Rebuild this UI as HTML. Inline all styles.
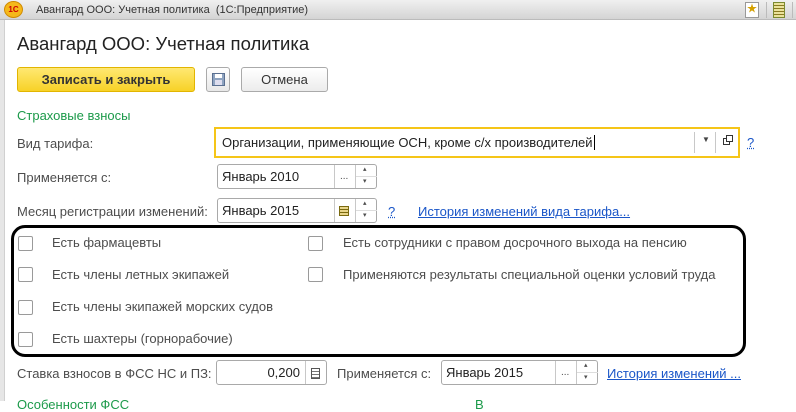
<!DOCTYPE html>
<html><head><meta charset="utf-8"><style>
*{box-sizing:border-box;margin:0;padding:0}
body{width:796px;height:401px;overflow:hidden;background:#fff;font-family:"Liberation Sans","Noto Sans CJK SC",sans-serif;font-size:13px;color:#4d4d4d;position:relative}
.a{position:absolute;white-space:nowrap}
.title{left:0;top:0;width:796px;height:20px;background:linear-gradient(#f0f0f0,#d4d4d4);border-bottom:1px solid #bbb}
.lb{left:0;top:20px;width:5px;height:381px;background:#e6e6e6;border-right:1px solid #d0d0d0}
.fld{position:absolute;border:1px solid #a9a9a9;border-radius:3px;background:#fff}
.cb{position:absolute;width:15px;height:15px;border:1px solid #9a9a9a;border-radius:2px;background:#fff}
.link{color:#1a56c8;text-decoration:underline}
.q{color:#1a56c8;text-decoration:underline dotted}
.sep{position:absolute;top:0;bottom:0;width:1px;background:#c8c8c8}
</style></head><body>
<div class="a title"></div>
<div class="a" style="left:4px;top:1px;width:19px;height:17px;border-radius:50%;background:#f5b81a;border:1px solid #d08a00;font-size:8px;font-weight:bold;color:#c00;text-align:center;line-height:15px">1С</div>
<div class="a" style="left:36px;top:4px;font-size:11px;color:#333">Авангард ООО: Учетная политика &nbsp;(1С:Предприятие)</div>
<div class="a" style="left:745px;top:2px;width:14px;height:16px;border:1px solid #999;background:#fff;font-size:10px;color:#d4a000;text-align:center;line-height:14px">★</div>
<div class="a" style="left:766px;top:2px;width:1px;height:16px;background:#bbb"></div>
<div class="a" style="left:773px;top:2px;width:12px;height:16px;border:1px solid #7a8a30;background:repeating-linear-gradient(#e9e29a 0 2px,#8a7a20 2px 3px)"></div>
<div class="a" style="left:792px;top:2px;width:1px;height:16px;background:#bbb"></div>
<div class="a lb"></div>

<div class="a" style="left:17px;top:33px;font-size:18.5px;color:#222">Авангард ООО: Учетная политика</div>

<div class="a" style="left:17px;top:67px;width:178px;height:25px;border:1px solid #e2b500;border-radius:3px;background:linear-gradient(#ffe872,#f7d227);font-weight:bold;color:#333;text-align:center;line-height:23px">Записать и закрыть</div>
<div class="a" style="left:206px;top:67px;width:24px;height:25px;border:1px solid #aaa;border-radius:3px;background:linear-gradient(#fff,#e8e8e8)"><div style="position:absolute;left:5px;top:5px;width:13px;height:13px;background:#8ea3c0;border:1px solid #5a6f90"><div style="position:absolute;left:2px;top:0;width:7px;height:4px;background:#fff"></div><div style="position:absolute;left:2px;top:6px;width:7px;height:5px;background:#dde"></div></div></div>
<div class="a" style="left:241px;top:67px;width:87px;height:25px;border:1px solid #aaa;border-radius:3px;background:linear-gradient(#fff,#ececec);color:#333;text-align:center;line-height:23px">Отмена</div>

<div class="a" style="left:17px;top:108px;color:#1c9a4a">Страховые взносы</div>

<div class="a" style="left:17px;top:136px">Вид тарифа:</div>
<div class="fld" style="left:214px;top:127px;width:526px;height:31px;border:2px solid #f5c518;border-radius:0">
<div class="a" style="left:6px;top:6px;color:#222">Организации, применяющие ОСН, кроме с/х производителей<span style="border-left:1px solid #000;margin-left:1px"></span></div>
<div class="sep" style="left:478px;top:3px;bottom:3px"></div>
<div class="a" style="left:486px;top:6px;font-size:8px;color:#444">▼</div>
<div class="sep" style="left:499px;top:3px;bottom:3px"></div>
<div class="a" style="left:507px;top:9px;width:7px;height:7px;border:1px solid #333"></div>
<div class="a" style="left:510px;top:6px;width:7px;height:7px;border:1px solid #333;background:#fff"></div>
</div>
<div class="a q" style="left:747px;top:135px">?</div>

<div class="a" style="left:17px;top:170px">Применяется с:</div>
<div class="fld" style="left:217px;top:164px;width:160px;height:25px">
<div class="a" style="left:4px;top:4px;color:#222">Январь 2010</div>
<div class="sep" style="left:116px"></div><div class="a" style="left:122px;top:6px;font-size:10px">...</div>
<div class="sep" style="left:137px"></div>
<div class="a" style="left:138px;top:11px;width:21px;height:1px;background:#ddd"></div>
<div class="a" style="left:145px;top:0px;font-size:7px">▴</div><div class="a" style="left:145px;top:12px;font-size:7px">▾</div>
</div>

<div class="a" style="left:17px;top:204px">Месяц регистрации изменений:</div>
<div class="fld" style="left:217px;top:198px;width:160px;height:25px">
<div class="a" style="left:4px;top:4px;color:#222">Январь 2015</div>
<div class="sep" style="left:116px"></div>
<div class="a" style="left:121px;top:7px;width:10px;height:10px;border:1px solid #7a6a10;background:repeating-linear-gradient(#e8d58a 0 2px,#7a6a10 2px 3px)"></div>
<div class="sep" style="left:137px"></div>
<div class="a" style="left:138px;top:11px;width:21px;height:1px;background:#ddd"></div>
<div class="a" style="left:145px;top:0px;font-size:7px">▴</div><div class="a" style="left:145px;top:12px;font-size:7px">▾</div>
</div>
<div class="a q" style="left:388px;top:204px">?</div>
<div class="a link" style="left:418px;top:204px">История изменений вида тарифа...</div>

<div class="a" style="left:11px;top:225px;width:735px;height:132px;border:3px solid #000;border-radius:14px"></div>
<div class="cb" style="left:18px;top:236px"></div><div class="a" style="left:52px;top:235px">Есть фармацевты</div>
<div class="cb" style="left:18px;top:267px"></div><div class="a" style="left:52px;top:267px">Есть члены летных экипажей</div>
<div class="cb" style="left:18px;top:300px"></div><div class="a" style="left:52px;top:299px">Есть члены экипажей морских судов</div>
<div class="cb" style="left:18px;top:332px"></div><div class="a" style="left:52px;top:331px">Есть шахтеры (горнорабочие)</div>
<div class="cb" style="left:308px;top:236px"></div><div class="a" style="left:343px;top:235px">Есть сотрудники с правом досрочного выхода на пенсию</div>
<div class="cb" style="left:308px;top:267px"></div><div class="a" style="left:343px;top:267px">Применяются результаты специальной оценки условий труда</div>

<div class="a" style="left:17px;top:366px">Ставка взносов в ФСС НС и ПЗ:</div>
<div class="fld" style="left:216px;top:360px;width:111px;height:25px">
<div class="a" style="right:26px;top:4px;color:#222">0,200</div>
<div class="sep" style="left:88px"></div>
<div class="a" style="left:94px;top:7px;width:9px;height:11px;border:1px solid #555;background:repeating-linear-gradient(#fff 0 2px,#777 2px 3px)"></div>
</div>
<div class="a" style="left:337px;top:366px">Применяется с:</div>
<div class="fld" style="left:441px;top:360px;width:157px;height:25px">
<div class="a" style="left:4px;top:4px;color:#222">Январь 2015</div>
<div class="sep" style="left:113px"></div><div class="a" style="left:119px;top:6px;font-size:10px">...</div>
<div class="sep" style="left:134px"></div>
<div class="a" style="left:135px;top:11px;width:21px;height:1px;background:#ddd"></div>
<div class="a" style="left:142px;top:0px;font-size:7px">▴</div><div class="a" style="left:142px;top:12px;font-size:7px">▾</div>
</div>
<div class="a link" style="left:607px;top:366px">История изменений ...</div>

<div class="a" style="left:17px;top:397px;color:#1c9a4a">Особенности ФСС</div>
<div class="a" style="left:475px;top:397px;color:#1c9a4a">В</div>
</body></html>
